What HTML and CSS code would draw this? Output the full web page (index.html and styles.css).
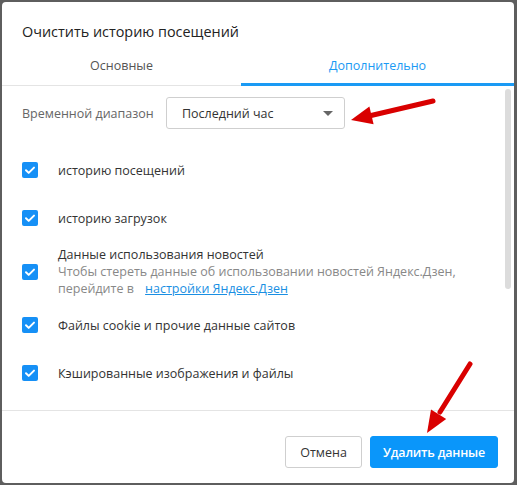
FILE: index.html
```html
<!DOCTYPE html>
<html>
	<head>
		<meta charset="utf-8" />
		<meta name="viewport" content="width=device-width, initial-scale=1" />
		<title>Очистить историю посещений</title>
		<link rel="stylesheet" href="styles.css">
	</head>
	<body>
		<div class="dialog">
			<h1 class="title">Очистить историю посещений</h1>
			<div class="tabs">
				<div class="tab tab-main">Основные</div>
				<div class="tab tab-active">Дополнительно</div>
			</div>

			<div class="content">
				<div class="range">
					<span class="range-label">Временной диапазон</span>
					<div class="select">
						<span>Последний час</span>
						<span class="caret"></span>
					</div>
				</div>

				<!-- checkbox rows -->
				<div class="row">
					<span class="check"><svg viewBox="0 0 16 16" width="16" height="16"><path d="M4 8.3l2.7 2.6L12 5.6" fill="none" stroke="#fff" stroke-width="2" stroke-linecap="round" stroke-linejoin="round"/></svg></span>
					<span class="row-text">историю посещений</span>
				</div>
				<div class="row">
					<span class="check"><svg viewBox="0 0 16 16" width="16" height="16"><path d="M4 8.3l2.7 2.6L12 5.6" fill="none" stroke="#fff" stroke-width="2" stroke-linecap="round" stroke-linejoin="round"/></svg></span>
					<span class="row-text">историю загрузок</span>
				</div>
				<div class="row row-tall">
					<span class="check"><svg viewBox="0 0 16 16" width="16" height="16"><path d="M4 8.3l2.7 2.6L12 5.6" fill="none" stroke="#fff" stroke-width="2" stroke-linecap="round" stroke-linejoin="round"/></svg></span>
					<div class="row-text">
						<div>Данные использования новостей</div>
						<div class="hint">Чтобы стереть данные об использовании новостей Яндекс.Дзен,</div>
						<div class="hint">перейдите в <a href="#" class="link">настройки Яндекс.Дзен</a></div>
					</div>
				</div>
				<div class="row">
					<span class="check"><svg viewBox="0 0 16 16" width="16" height="16"><path d="M4 8.3l2.7 2.6L12 5.6" fill="none" stroke="#fff" stroke-width="2" stroke-linecap="round" stroke-linejoin="round"/></svg></span>
					<span class="row-text">Файлы cookie и прочие данные сайтов</span>
				</div>
				<div class="row">
					<span class="check"><svg viewBox="0 0 16 16" width="16" height="16"><path d="M4 8.3l2.7 2.6L12 5.6" fill="none" stroke="#fff" stroke-width="2" stroke-linecap="round" stroke-linejoin="round"/></svg></span>
					<span class="row-text">Кэшированные изображения и файлы</span>
				</div>

				<div class="scroll-thumb"></div>
			</div>

			<div class="footer">
				<button type="button" class="btn btn-cancel">Отмена</button>
				<button type="button" class="btn btn-primary">Удалить данные</button>
			</div>
		</div>

		<!-- red pointer arrows drawn over the dialog -->
		<svg class="arrows" width="517" height="485" viewBox="0 0 517 485">
			<line x1="433" y1="101" x2="370" y2="115.7" stroke="#d90000" stroke-width="5" stroke-linecap="round"/>
			<polygon points="351,120 369.4,106.6 373.6,124.2" fill="#d90000"/>
			<line x1="470" y1="364" x2="440" y2="412" stroke="#d90000" stroke-width="5" stroke-linecap="round"/>
			<polygon points="427,433 431,409.5 446.2,419.1" fill="#d90000"/>
		</svg>
	</body>
</html>
```

FILE: styles.css
```css
html, body {
    margin: 0;
    padding: 0;
}

body {
    background-color: #5e5e5e;
    font-family: "Open Sans", "Noto Sans", sans-serif;
    width: 517px;
    height: 485px;
    overflow: hidden;
}

.dialog {
    margin: 2px 3px 0 2px;
    height: 481px;
    background-color: #fff;
    border-radius: 4px;
    display: flex;
    flex-direction: column;
    overflow: hidden;
}

.title {
    margin: 0;
    padding: 20px 0 0 20px;
    height: 28px;
    font-size: 14.4px;
    font-weight: normal;
    line-height: 20px;
    color: #222;
}

.tabs {
    display: flex;
    border-bottom: 1px solid #e4e4e4;
}

.tab {
    height: 33px;
    line-height: 32px;
    text-align: center;
    font-size: 12.5px;
    color: #555;
}

.tab-main {
    width: 239px;
}

.tab-active {
    flex: 1;
    color: #1a9af4;
    border-bottom: 3px solid #1a9af4;
    margin-bottom: -1px;
}

.content {
    position: relative;
    flex: 1;
    padding: 11px 0 0 20px;
    overflow: hidden;
}

.range {
    display: flex;
    align-items: center;
    margin-bottom: 17px;
}

.range-label {
    width: 144px;
    font-size: 12.5px;
    color: #666;
}

.select {
    width: 151px;
    height: 30px;
    padding: 0 11px 0 15px;
    border: 1px solid #cfcfcf;
    border-radius: 3px;
    display: flex;
    align-items: center;
    justify-content: space-between;
    font-size: 12.5px;
    color: #333;
}

.caret {
    width: 0;
    height: 0;
    border-left: 5px solid transparent;
    border-right: 5px solid transparent;
    border-top: 5px solid #666;
}

.row {
    height: 48px;
    display: flex;
    align-items: center;
}

.row-tall {
    height: auto;
    padding: 4px 0;
    line-height: 17px;
}

.check {
    width: 16px;
    height: 16px;
    border-radius: 2px;
    background-color: #1690f6;
    margin-right: 20px;
    flex-shrink: 0;
}

.check svg {
    display: block;
}

.row-text {
    font-size: 12.5px;
    color: #333;
}

.hint {
    color: #888;
}

.link {
    margin-left: 8px;
    color: #1a8fe3;
}

.scroll-thumb {
    position: absolute;
    top: 3px;
    right: 3px;
    width: 6px;
    height: 200px;
    border-radius: 3px;
    background-color: #dcdcdc;
}

.footer {
    height: 73px;
    border-top: 1px solid #e4e4e4;
    display: flex;
    justify-content: flex-end;
    align-items: flex-start;
    gap: 8px;
    padding: 0 16px 0 0;
    box-sizing: border-box;
}

.btn {
    margin-top: 25px;
    height: 32px;
    padding: 0;
    border: 1px solid #cfcfcf;
    border-radius: 3px;
    background-color: #fff;
    font-family: "Open Sans", "Noto Sans", sans-serif;
    font-size: 12.5px;
    color: #333;
    cursor: pointer;
}

.btn-cancel {
    width: 77px;
}

.btn-primary {
    width: 128px;
    border-color: #0a96fa;
    background-color: #0a96fa;
    color: #fff;
    font-weight: 600;
    letter-spacing: -0.2px;
}

.arrows {
    position: absolute;
    left: 0;
    top: 0;
}
```
